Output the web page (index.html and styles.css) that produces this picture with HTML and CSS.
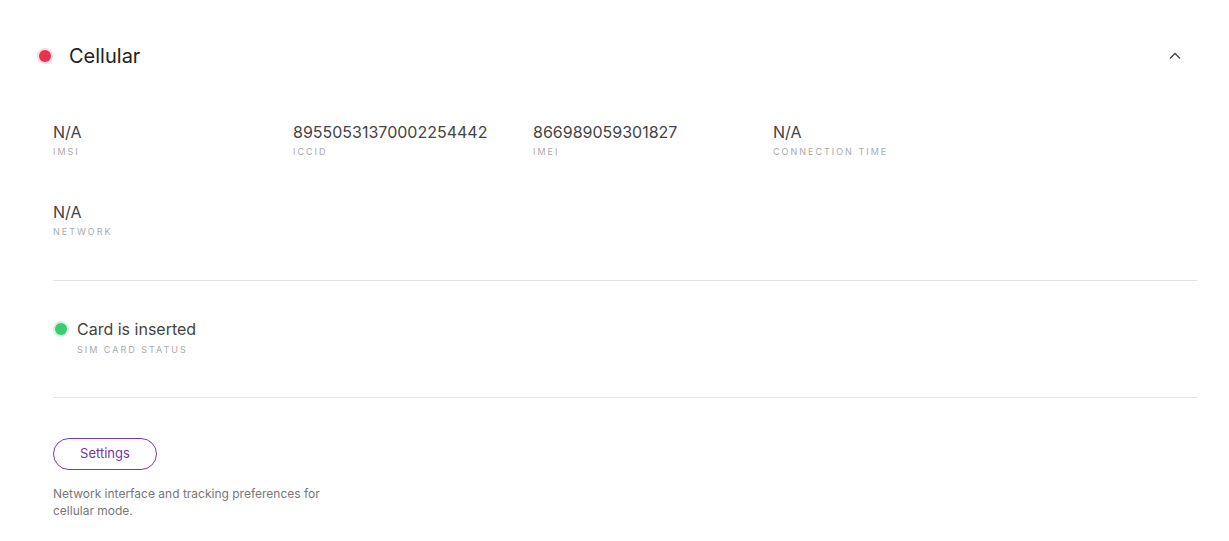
FILE: index.html
```html
<!DOCTYPE html>
<html>
<head>
<meta charset="utf-8">
<link rel="stylesheet" href="styles.css">
</head>
<body>
<div class="panel">
  <div class="header">
    <span class="status-dot red"></span>
    <h2 class="title">Cellular</h2>
    <svg class="chevron" width="14" height="14" viewBox="0 0 14 14"><path d="M2 9.5 L7 4.5 L12 9.5" fill="none" stroke="#444" stroke-width="1.3"/></svg>
  </div>
  <div class="body">
    <div class="grid">
      <div class="field"><div class="value">N/A</div><div class="label">IMSI</div></div>
      <div class="field"><div class="value">89550531370002254442</div><div class="label">ICCID</div></div>
      <div class="field"><div class="value">866989059301827</div><div class="label">IMEI</div></div>
      <div class="field"><div class="value">N/A</div><div class="label">Connection time</div></div>
      <div class="field"><div class="value">N/A</div><div class="label">Network</div></div>
    </div>
    <div class="divider first"></div>
    <div class="sim">
      <div class="value sim-value"><span class="status-dot green"></span>Card is inserted</div>
      <div class="label sim-label">SIM card status</div>
    </div>
    <div class="divider second"></div>
    <button class="btn">Settings</button>
    <p class="desc">Network interface and tracking preferences for<br>cellular mode.</p>
  </div>
</div>
</body>
</html>
```
FILE: styles.css
```css
* { box-sizing: border-box; }
body {
  margin: 0;
  background: #fff;
  font-family: Inter, "Noto Sans", sans-serif;
  color: #333;
}
.panel {
  padding: 0 32px 0 37px;
}
.header {
  display: flex;
  align-items: center;
  height: 112px;
}
.status-dot {
  display: inline-block;
  width: 12px;
  height: 12px;
  border-radius: 50%;
}
.status-dot.red {
  background: #e8334f;
  box-shadow: 0 0 0 2px #fbd9df;
  margin-left: 2px;
}
.title {
  margin: 0 0 0 18px;
  font-size: 20px;
  font-weight: 400;
  color: #222;
  flex: 1;
}
.chevron {
  margin-right: 15px;
}
.body {
  padding-left: 16px;
}
.grid {
  display: grid;
  grid-template-columns: repeat(4, 240px);
  row-gap: 44px;
  padding-top: 10px;
}
.value {
  font-size: 16px;
  line-height: 20px;
  color: #444;
}
.label {
  margin-top: 4px;
  font-size: 9px;
  line-height: 12px;
  letter-spacing: 2px;
  text-transform: uppercase;
  color: #aaa;
}
.divider {
  height: 1px;
  background: #e3e3e3;
}
.divider.first {
  margin-top: 42px;
}
.divider.second {
  margin-top: 41px;
}
.sim {
  padding-top: 38px;
}
.sim-value {
  display: flex;
  align-items: center;
}
.status-dot.green {
  background: #3ccb6e;
  box-shadow: 0 0 0 2px #d4f3df;
  margin: 0 10px 0 2px;
}
.sim-label {
  margin-top: 5px;
  padding-left: 24px;
}
.btn {
  margin-top: 40px;
  width: 104px;
  height: 32px;
  border: 1px solid #7b3aa6;
  border-radius: 16px;
  background: #fff;
  color: #7336a0;
  font-family: Inter, sans-serif;
  font-size: 13px;
  line-height: 28px;
  padding: 0 0 2px;
}
.desc {
  margin: 15px 0 0;
  font-size: 12px;
  line-height: 17px;
  color: #777;
}
```
